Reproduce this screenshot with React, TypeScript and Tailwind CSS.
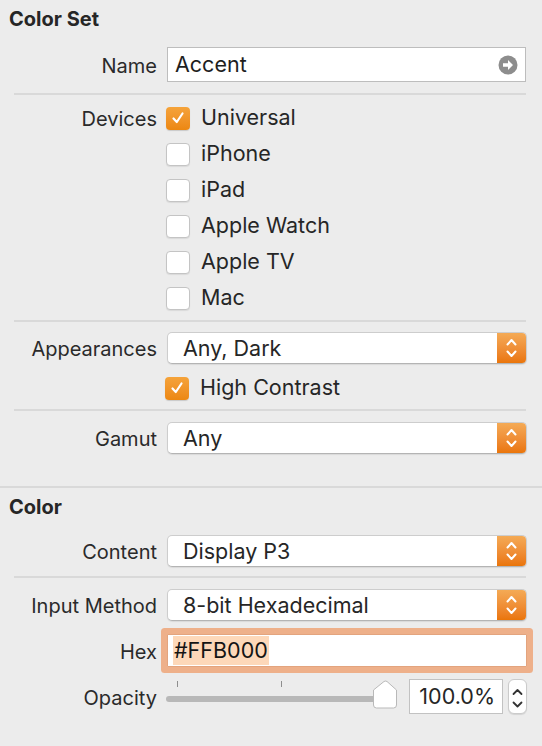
import React from 'react';

const font = { fontFamily: 'Inter, "Liberation Sans", sans-serif' };

function Check({ checked }: { checked?: boolean }) {
  if (checked) {
    return (
      <div className="w-[24px] h-[23px] rounded-[4px] bg-gradient-to-b from-[#f5a33a] to-[#ec8710] flex items-center justify-center shadow-[0_1px_1px_rgba(0,0,0,0.15)]">
        <svg width="16" height="16" viewBox="0 0 16 16">
          <path d="M3.5 8.5 L6.8 12 L12.5 3.5" fill="none" stroke="white" strokeWidth="2.2" strokeLinecap="round" strokeLinejoin="round" />
        </svg>
      </div>
    );
  }
  return <div className="w-[24px] h-[23px] rounded-[4px] bg-white border border-[#c4c4c4] shadow-[0_1px_1px_rgba(0,0,0,0.08)]" />;
}

function Popup({ value }: { value: string }) {
  return (
    <div className="w-[360px] h-[32px] flex bg-white rounded-[5px] border border-[#cdcdcd] border-b-[#b4b4b4] shadow-[0_1px_1px_rgba(0,0,0,0.08)] overflow-hidden">
      <div className="flex-1 flex items-center pl-[15px] text-[21.5px] text-[#262626]">{value}</div>
      <div className="w-[29px] h-full bg-gradient-to-b from-[#f4aa55] to-[#ea7507] flex items-center justify-center">
        <svg width="29" height="32" viewBox="0 0 29 32">
          <path d="M10.5 12.5 L14.5 8 L18.5 12.5" fill="none" stroke="white" strokeWidth="2" strokeLinecap="round" strokeLinejoin="round" />
          <path d="M10.5 19.5 L14.5 24 L18.5 19.5" fill="none" stroke="white" strokeWidth="2" strokeLinecap="round" strokeLinejoin="round" />
        </svg>
      </div>
    </div>
  );
}

function Row({ label, children, className = '' }: { label?: string; children: React.ReactNode; className?: string }) {
  return (
    <div className={`flex items-center ${className}`}>
      <div className="w-[157px] shrink-0 text-right text-[20px] text-[#2a2a2a] leading-none pt-[2px]">{label}</div>
      <div className="ml-[10px]">{children}</div>
    </div>
  );
}

function Separator({ className = '' }: { className?: string }) {
  return <div className={`ml-[14px] w-[512px] h-[2px] bg-[#d9d9d9] ${className}`} />;
}

function CheckRow({ label, checked }: { label: string; checked?: boolean }) {
  return (
    <div className="flex items-center -ml-[1px] h-[24px]">
      <Check checked={checked} />
      <span className="ml-[11px] text-[21.5px] text-[#262626] leading-none">{label}</span>
    </div>
  );
}

function Slider() {
  return (
    <svg width="234" height="35" viewBox="0 0 234 35">
      <rect x="11" y="2" width="1" height="6" fill="#8e8e8e" />
      <rect x="115" y="2" width="1" height="6" fill="#8e8e8e" />
      <rect x="219" y="2" width="1" height="6" fill="#8e8e8e" />
      <rect x="0" y="17" width="214" height="6" rx="3" fill="#b8b8b8" />
      <path d="M207.5 11 L218 2.5 Q219.5 1.5 221 2.5 L230.5 11 V26 Q230.5 29 227.5 29 H210.5 Q207.5 29 207.5 26 Z" fill="white" stroke="#b9b9b9" strokeWidth="1" />
    </svg>
  );
}

export default function App() {
  const devices = ['Universal', 'iPhone', 'iPad', 'Apple Watch', 'Apple TV', 'Mac'];
  return (
    <div className="w-[542px] h-[746px] bg-[#ececec] overflow-hidden" style={font}>
      <div className="h-[38px] flex items-center pl-[9px] text-[20px] font-bold text-[#262626]">Color Set</div>

      <Row label="Name" className="mt-[9px]">
        <div className="w-[359px] h-[35px] bg-white border border-[#bdbdbd] flex items-center justify-between pl-[7px] pr-[7px]">
          <span className="text-[21.5px] text-[#1e1e1e]">Accent</span>
          <svg width="20" height="20" viewBox="0 0 20 20">
            <circle cx="10" cy="10" r="9.5" fill="#8d8d8d" />
            <path d="M5 8.2 H10 V5 L15 10 L10 15 V11.8 H5 Z" fill="white" />
          </svg>
        </div>
      </Row>

      <Separator className="mt-[11px]" />

      <div className="flex mt-[11px]">
        <div className="w-[157px] shrink-0 h-[24px] flex items-center justify-end text-[20px] text-[#2a2a2a] leading-none pt-[2px]">Devices</div>
        <div className="ml-[10px] flex flex-col gap-[12px]">
          {devices.map((d, i) => (
            <CheckRow key={d} label={d} checked={i === 0} />
          ))}
        </div>
      </div>

      <Separator className="mt-[10px]" />

      <Row label="Appearances" className="mt-[10px]">
        <Popup value="Any, Dark" />
      </Row>
      <div className="mt-[12px] ml-[166px]">
        <CheckRow label="High Contrast" checked />
      </div>

      <Separator className="mt-[9px]" />

      <Row label="Gamut" className="mt-[11px]">
        <Popup value="Any" />
      </Row>

      <div className="mt-[32px] h-[2px] w-full bg-[#d9d9d9]" />

      <div className="h-[38px] flex items-center pl-[9px] text-[20px] font-bold text-[#262626]">Color</div>

      <Row label="Content" className="mt-[9px]">
        <Popup value="Display P3" />
      </Row>

      <Separator className="mt-[9px]" />

      <Row label="Input Method" className="mt-[11px]">
        <Popup value="8-bit Hexadecimal" />
      </Row>

      <Row label="Hex" className="mt-[13px]">
        <div className="w-[360px] h-[33px] bg-white border border-[#e3a47e] rounded-[1px] shadow-[0_0_0_6px_#eeb08a] flex items-center pl-[5px]">
          <span className="bg-[#fdd8b9] text-[21.5px] text-[#141414] h-[29px] flex items-center px-[1px]">#FFB000</span>
        </div>
      </Row>

      <Row label="Opacity" className="mt-[12px]">
        <div className="flex items-start -ml-[1px]">
          <Slider />
          <div className="ml-[9px] w-[94px] h-[35px] bg-white border border-[#c2c2c2] flex items-center justify-end pr-[7px] text-[21.5px] text-[#262626]">
            100.0%
          </div>
          <div className="ml-[5px] w-[19px] h-[35px] bg-white rounded-[6px] border border-[#cbcbcb] shadow-[0_1px_1px_rgba(0,0,0,0.1)]">
            <svg width="19" height="35" viewBox="0 0 19 35" className="-ml-[1px] -mt-[1px]">
              <path d="M5.5 15 L9.5 11 L13.5 15" fill="none" stroke="#333" strokeWidth="1.8" strokeLinecap="round" strokeLinejoin="round" />
              <path d="M5.5 23.5 L9.5 27.5 L13.5 23.5" fill="none" stroke="#333" strokeWidth="1.8" strokeLinecap="round" strokeLinejoin="round" />
            </svg>
          </div>
        </div>
      </Row>
    </div>
  );
}
